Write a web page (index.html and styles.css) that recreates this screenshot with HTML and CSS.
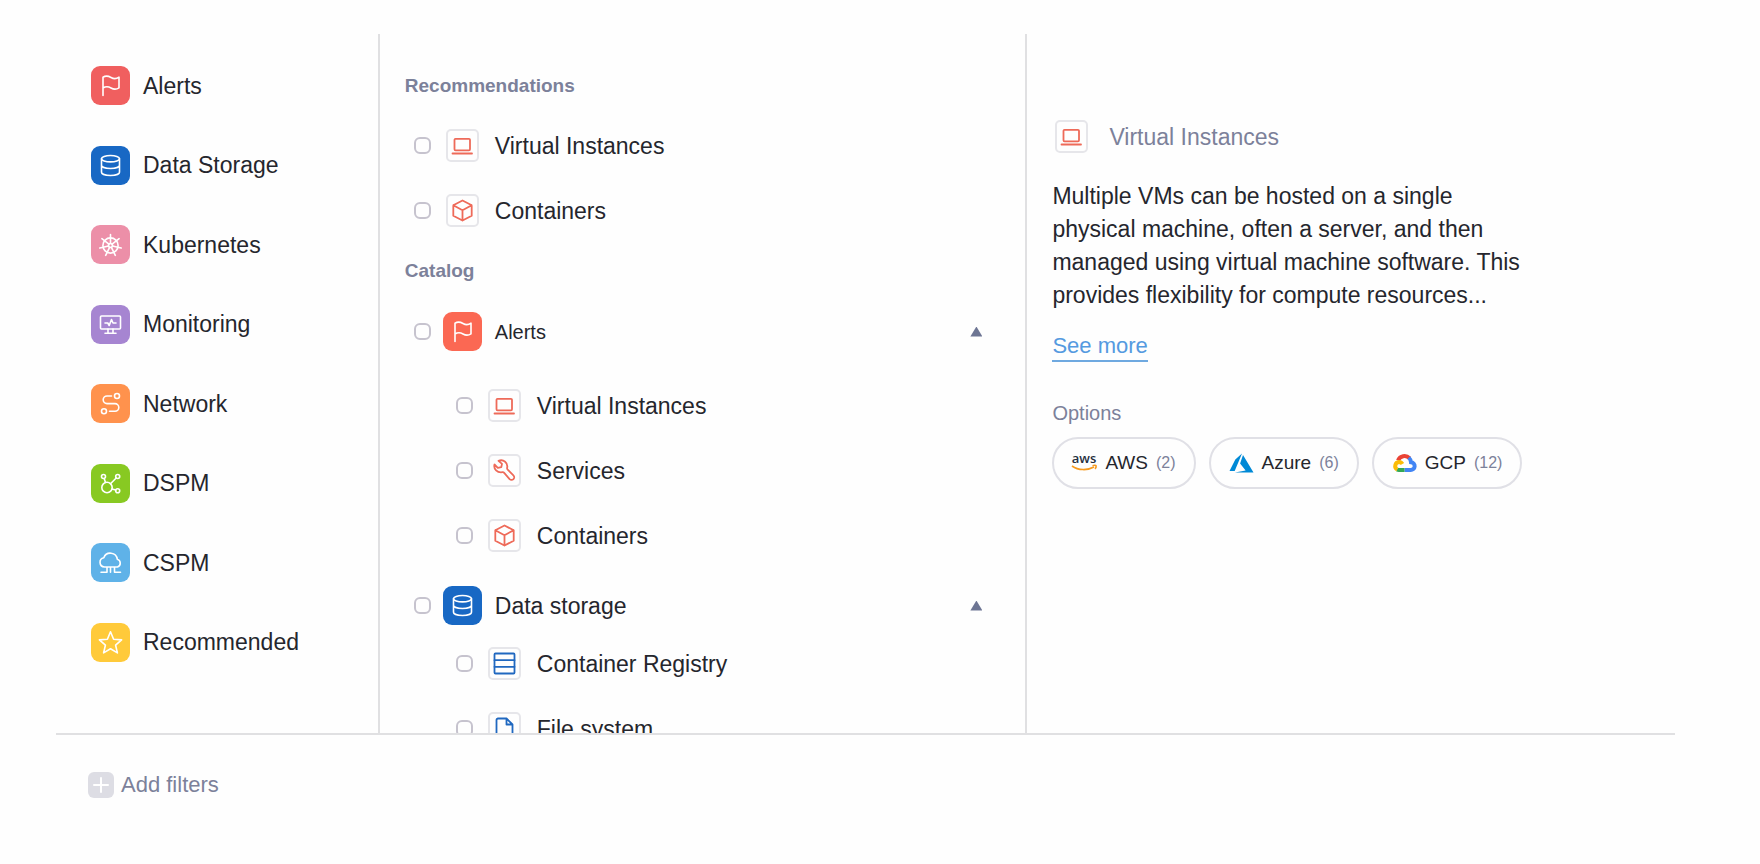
FILE: index.html
```html
<!DOCTYPE html>
<html lang="en">
<head>
<meta charset="utf-8">
<title>Filter catalog</title>
<link rel="stylesheet" href="styles.css">
</head>
<body>
<svg class="sprite" aria-hidden="true">
  <symbol id="flag" viewBox="0 0 39 39"><path d="M12 29.500V11.200c2.600-1.600 5.400-1.200 8 .3 2.700 1.500 5.300 1.500 8-.3v10.600c-2.700 1.800-5.300 1.700-8 .2-2.600-1.500-5.400-1.600-8 0"/></symbol>
  <symbol id="database" viewBox="0 0 39 39"><ellipse cx="19.500" cy="12.700" rx="9" ry="3.200"/><path d="M10.500 12.700v13.600c0 1.800 4 3.200 9 3.200s9-1.400 9-3.200V12.700M10.500 19.300c0 1.800 4 3.200 9 3.200s9-1.400 9-3.200"/></symbol>
  <symbol id="helm" viewBox="0 0 39 39"><circle cx="19.500" cy="20.500" r="7.600"/><circle cx="19.500" cy="20.500" r="2"/><path d="M19.500 18.500V9.500M21.100 19.200l7-5.500M21.500 21l8.700 2M20.400 22.300l3.900 8M18.600 22.300l-3.900 8M17.500 21l-8.700 2M17.900 19.200l-7-5.500"/></symbol>
  <symbol id="monitor" viewBox="0 0 39 39"><rect x="9.500" y="11" width="20" height="13" rx="1"/><path d="M17 24v4M22 24v4M14 28.300h11M14 18h2.800l1.400 2.500 2.300-6 1.500 3.500h3"/></symbol>
  <symbol id="route" viewBox="0 0 39 39"><circle cx="26" cy="12" r="2.500"/><circle cx="13" cy="27.300" r="2.500"/><path d="M20.500 12H16a3.800 3.800 0 0 0 0 7.600h8a3.800 3.800 0 0 1 0 7.600h-5.500"/></symbol>
  <symbol id="nodes" viewBox="0 0 39 39"><circle cx="16" cy="23.500" r="5.200"/><circle cx="12.500" cy="12.500" r="2"/><circle cx="26.700" cy="12.500" r="2"/><circle cx="26.700" cy="26.700" r="2"/><path d="M13.200 14.500l1.300 4M25.200 14l-5.700 5.700M21 25l3.700 1.100"/></symbol>
  <symbol id="cloud" viewBox="0 0 39 39"><path d="M13.500 24a4.700 4.700 0 0 1-.7-9.300 7 7 0 0 1 13.500 1.500A4.100 4.100 0 0 1 26.500 24zM16 24v5.300h-6M19.500 24v5.300M23.500 24v5.300H29.500"/></symbol>
  <symbol id="star" viewBox="0 0 39 39"><path d="M19.500 8.800l3.100 7.400 8 .7-6 5.300 1.800 7.700-6.900-4.100-6.900 4.100 1.800-7.700-6-5.300 8-.7z"/></symbol>
  <symbol id="laptop" viewBox="2 2 29 29"><rect x="8.500" y="9.800" width="15.500" height="11.500" rx="1"/><path d="M6.500 24.500h19.500"/></symbol>
  <symbol id="cube" viewBox="2 2 29 29"><path d="M16.500 6.500l9.200 4.800v10.400l-9.200 4.800-9.200-4.800V11.300zM7.300 11.300l9.200 4.900 9.200-4.900M16.500 16.200v10.300"/></symbol>
  <symbol id="wrench" viewBox="2 2 29 29"><path d="M10.500 6.800c5-1.900 9.800 2 8.600 7.200-.1.700.1 1.200.6 1.700l5.700 5.600a2.700 2.700 0 0 1-3.800 3.900l-5.400-6.300c-.5-.6-1-.8-1.800-.7C9.200 19 5.300 14.800 6.500 10.500l3.300 3.300 3.500-.7.700-3.200z"/></symbol>
  <symbol id="rows" viewBox="2 2 29 29"><rect x="6.500" y="6.500" width="20" height="20" rx="1"/><path d="M6.500 13.200h20M6.500 19.800h20"/></symbol>
  <symbol id="file" viewBox="2 2 29 29"><path d="M18.500 6.500H10a1.500 1.500 0 0 0-1.500 1.500v17a1.500 1.500 0 0 0 1.500 1.500h13a1.500 1.500 0 0 0 1.500-1.500V12.500zM18.500 6.500v6h6"/></symbol>
</svg>

<div class="shell">
  <main class="columns">
    <nav class="categories" aria-label="Categories">
      <a class="category" href="#alerts"><span class="tile red"><svg><use href="#flag"/></svg></span>Alerts</a>
      <a class="category" href="#storage"><span class="tile blue"><svg><use href="#database"/></svg></span>Data Storage</a>
      <a class="category" href="#kubernetes"><span class="tile pink"><svg><use href="#helm"/></svg></span>Kubernetes</a>
      <a class="category" href="#monitoring"><span class="tile purple"><svg><use href="#monitor"/></svg></span>Monitoring</a>
      <a class="category" href="#network"><span class="tile orange"><svg><use href="#route"/></svg></span>Network</a>
      <a class="category" href="#dspm"><span class="tile green"><svg><use href="#nodes"/></svg></span>DSPM</a>
      <a class="category" href="#cspm"><span class="tile sky"><svg><use href="#cloud"/></svg></span>CSPM</a>
      <a class="category" href="#recommended"><span class="tile yellow"><svg><use href="#star"/></svg></span>Recommended</a>
    </nav>

    <section class="catalog">
      <h2 class="heading">Recommendations</h2>
      <ul class="list">
        <li><label class="row"><input class="check" type="checkbox"><span class="slot"><svg class="chip"><use href="#laptop"/></svg></span>Virtual Instances</label></li>
        <li><label class="row"><input class="check" type="checkbox"><span class="slot"><svg class="chip"><use href="#cube"/></svg></span>Containers</label></li>
      </ul>

      <h2 class="heading second">Catalog</h2>
      <div class="group" id="alerts">
        <div class="group-head">
          <label class="row compact"><input class="check" type="checkbox"><span class="tile coral"><svg><use href="#flag"/></svg></span>Alerts</label>
          <button class="toggle" type="button" aria-label="Collapse Alerts" aria-expanded="true"></button>
        </div>
        <ul class="list nested roomy">
          <li><label class="row"><input class="check" type="checkbox"><span class="slot"><svg class="chip"><use href="#laptop"/></svg></span>Virtual Instances</label></li>
          <li><label class="row"><input class="check" type="checkbox"><span class="slot"><svg class="chip"><use href="#wrench"/></svg></span>Services</label></li>
          <li><label class="row"><input class="check" type="checkbox"><span class="slot"><svg class="chip"><use href="#cube"/></svg></span>Containers</label></li>
        </ul>
      </div>
      <div class="group" id="storage">
        <div class="group-head">
          <label class="row"><input class="check" type="checkbox"><span class="tile blue"><svg><use href="#database"/></svg></span>Data storage</label>
          <button class="toggle" type="button" aria-label="Collapse Data storage" aria-expanded="true"></button>
        </div>
        <ul class="list nested">
          <li><label class="row"><input class="check" type="checkbox"><span class="slot"><svg class="chip navy"><use href="#rows"/></svg></span>Container Registry</label></li>
          <li><label class="row"><input class="check" type="checkbox"><span class="slot"><svg class="chip navy"><use href="#file"/></svg></span>File system</label></li>
        </ul>
      </div>
    </section>

    <section class="detail">
      <h1 class="detail-title"><span class="slot"><svg class="chip"><use href="#laptop"/></svg></span>Virtual Instances</h1>
      <p class="summary">Multiple VMs can be hosted on a single physical machine, often a server, and then managed using virtual machine software. This provides flexibility for compute resources...</p>
      <a class="more" href="#more">See more</a>
      <h2 class="options-title">Options</h2>
      <div class="options">
        <button class="pill" type="button">
          <svg class="logo" viewBox="0 0 25 24" aria-hidden="true"><text class="aws-word" x="12" y="12" text-anchor="middle">aws</text><path class="aws-line" d="M0 15c6.500 4.600 15.500 4.600 22 1"/><path class="aws-line" d="M20.500 14.700c2.200-.5 3.400-.3 3.600.2.200.7-.2 2-1 3"/></svg>
          AWS <span class="count">(2)</span>
        </button>
        <button class="pill" type="button">
          <svg class="logo" viewBox="0 0 25 24" aria-hidden="true"><path fill="#0089d6" d="M13 2.500L6.300 8.500.5 20h5.200zM14 4l-2.900 8.600 5.500 7L5.900 21.500H24.500z"/></svg>
          Azure <span class="count">(6)</span>
        </button>
        <button class="pill" type="button">
          <svg class="logo gcp" viewBox="0 0 25 24" aria-hidden="true"><path stroke="#ea4335" d="M6 9.500A7 7 0 0 1 17.500 7.200"/><path stroke="#4285f4" d="M16.800 6.600a7 7 0 0 1 2.200 4.600 3.900 3.900 0 0 1-.5 7.800H12.500"/><path stroke="#34a853" d="M12.500 19H7a4 4 0 0 1-2-.5"/><path stroke="#fbbc05" d="M5.300 18.600a4 4 0 0 1 1.700-7.500c1.500 0 2.700.8 3.400 2"/></svg>
          GCP <span class="count">(12)</span>
        </button>
      </div>
    </section>
  </main>

  <footer class="footer">
    <button class="add" type="button"><svg class="plus" viewBox="0 0 26 26" aria-hidden="true"><path d="M13 6v14M6 13h14"/></svg>Add filters</button>
  </footer>
</div>
</body>
</html>
```
FILE: styles.css
```css
* {
  box-sizing: border-box;
}

body {
  margin: 0;
  background: #fefefe;
  color: #25262d;
  font: 23px/32px "Liberation Sans", Arial, sans-serif;
}

button {
  padding: 0;
  border: 0;
  background: none;
  color: inherit;
  font: inherit;
  cursor: pointer;
}

a {
  color: inherit;
  text-decoration: none;
}

.sprite {
  position: absolute;
  width: 0;
  height: 0;
}

.shell {
  display: flex;
  flex-direction: column;
  height: 100vh;
  padding: 34px 85px 0 56px;
}

.columns {
  display: grid;
  grid-template-columns: minmax(0, 1fr) minmax(0, 2fr) minmax(0, 2fr);
  grid-template-rows: minmax(0, 1fr);
  flex: 1;
  min-height: 0;
  border-bottom: 2px solid #e0e0e2;
}

.categories {
  display: flex;
  flex-direction: column;
  justify-content: space-between;
  padding: 32px 16px 71px 35px;
  border-right: 2px solid #e0e0e2;
}

.category {
  display: flex;
  align-items: center;
  gap: 13px;
}

.tile {
  flex: none;
  width: 39px;
  height: 39px;
  border-radius: 9px;
}

.tile svg {
  display: block;
  width: 39px;
  height: 39px;
  fill: none;
  stroke: #fff;
  stroke-width: 1.6;
  stroke-linejoin: round;
  stroke-linecap: round;
}

.red { background: #f05f5f; }
.blue { background: #1868c4; }
.pink { background: #ec8fa8; }
.purple { background: #a685d1; }
.orange { background: #ff924d; }
.green { background: #88c922; }
.sky { background: #5fb2e8; }
.yellow { background: #ffca3a; }
.coral { background: #fb6853; }

.catalog {
  overflow-y: auto;
  scrollbar-width: none;
  padding: 40px 25px 24px;
  border-right: 2px solid #e0e0e2;
}

.heading {
  margin: 0 0 15px;
  color: #7c819a;
  font-size: 19px;
  line-height: 24px;
}

.second {
  margin: 16px 0 23px;
}

.list {
  margin: 0;
  padding: 0;
  list-style: none;
}

.row {
  display: flex;
  align-items: center;
  height: 65px;
  padding-left: 9px;
}

.check {
  appearance: none;
  flex: none;
  width: 17px;
  height: 17px;
  margin: 0 12px 0 0;
  border: 2px solid #c6c3ce;
  border-radius: 6px;
}

.check:checked {
  background: #c6c3ce;
}

.row .slot,
.row .tile {
  margin-right: 13px;
}

.slot {
  display: flex;
  flex: none;
  justify-content: center;
  width: 39px;
}

.chip {
  width: 33px;
  height: 33px;
  border: 2px solid #e6e6ea;
  border-radius: 5px;
  fill: none;
  stroke: #ee6a59;
  stroke-width: 1.8;
  stroke-linejoin: round;
  stroke-linecap: round;
}

.navy {
  stroke: #2068c0;
}

.group {
  margin-bottom: 12px;
}

.group-head {
  display: flex;
  align-items: center;
  justify-content: space-between;
  padding-right: 18px;
}

.group-head .row {
  height: 51px;
}

.compact {
  font-size: 20px;
}

.toggle {
  width: 12px;
  height: 10px;
  background: #6d7593;
  clip-path: polygon(50% 0, 100% 100%, 0 100%);
}

.nested .row {
  padding-left: 51px;
}

.roomy {
  padding-top: 16px;
}

.detail {
  padding: 83px 25px 0;
}

.detail-title {
  display: flex;
  align-items: center;
  gap: 18px;
  height: 39px;
  margin: 0 0 24px;
  color: #7c819a;
  font-size: 23px;
  font-weight: normal;
}

.summary {
  max-width: 475px;
  margin: 0 0 17px;
  line-height: 33px;
}

.more {
  display: inline-block;
  border-bottom: 2px solid #6fa9e0;
  color: #559ae0;
  font-size: 22px;
  line-height: 28px;
}

.options-title {
  margin: 39px 0 12px;
  color: #7c819a;
  font-size: 20px;
  font-weight: normal;
  line-height: 24px;
}

.options {
  display: flex;
  flex-wrap: wrap;
  gap: 13px;
}

.pill {
  display: flex;
  align-items: center;
  gap: 8px;
  height: 52px;
  padding: 0 18px;
  border: 2px solid #e0e0e6;
  border-radius: 26px;
  font-size: 19px;
}

.logo {
  width: 25px;
  height: 24px;
  overflow: visible;
}

.aws-word {
  fill: #252f3e;
  font: 600 13px "Open Sans", sans-serif;
}

.aws-line {
  fill: none;
  stroke: #f79a1e;
  stroke-width: 1.6;
}

.gcp {
  fill: none;
  stroke-width: 4;
}

.count {
  color: #7c819a;
  font-size: 16px;
}

.footer {
  flex: none;
  padding: 34px 32px 63px;
}

.add {
  display: flex;
  align-items: center;
  gap: 7px;
  color: #7c819a;
  font-size: 22px;
}

.plus {
  width: 26px;
  height: 26px;
  border-radius: 6px;
  background: #dddde4;
  stroke: #fff;
  stroke-width: 2;
  stroke-linecap: round;
}
```
